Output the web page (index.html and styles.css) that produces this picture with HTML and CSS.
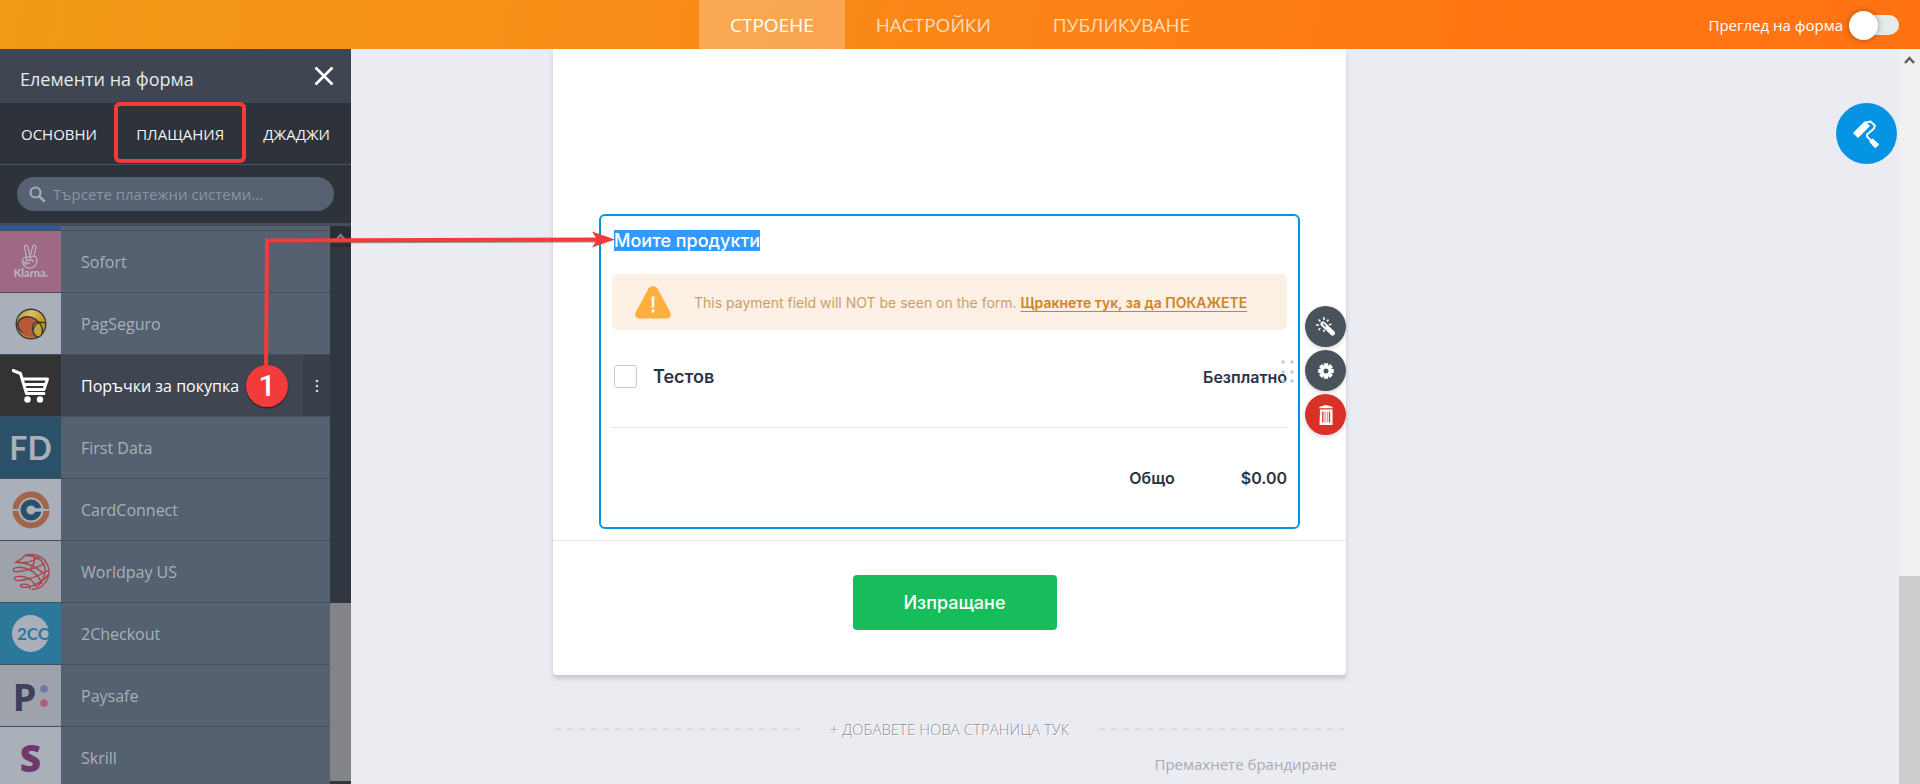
FILE: index.html
```html
<!DOCTYPE html>
<html lang="bg">
<head>
    <meta charset="UTF-8">
    <meta name="viewport" content="width=device-width, initial-scale=1.0">
    <title>Строене на форма</title>
    <link rel="stylesheet" href="styles.css">
</head>
<body>
    <header class="topbar">
        <nav class="topnav">
            <a href="#build" class="active">СТРОЕНЕ</a>
            <a href="#settings">НАСТРОЙКИ</a>
            <a href="#publish">ПУБЛИКУВАНЕ</a>
        </nav>
        <label class="preview">
            <span>Преглед на форма</span>
            <input type="checkbox" class="switch">
        </label>
    </header>

    <div class="workspace">
        <!-- Елементи -->
        <aside class="sidebar">
            <div class="side-head">
                <h2>Елементи на форма</h2>
                <button class="close" aria-label="Затвори">
                    <svg width="20" height="20" viewBox="0 0 20 20"><path d="M1.5 1.5l17 17M18.5 1.5l-17 17" stroke="#fff" stroke-width="2.6"/></svg>
                </button>
            </div>
            <div class="side-tabs">
                <button>ОСНОВНИ</button>
                <button class="active">ПЛАЩАНИЯ</button>
                <button>ДЖАДЖИ</button>
            </div>
            <div class="search">
                <label class="search-box">
                    <svg width="17" height="17" viewBox="0 0 17 17"><circle cx="6.5" cy="6.5" r="5" fill="none" stroke="#a3abb7" stroke-width="2.2"/><path d="M10.3 10.3l5.4 5.4" stroke="#a3abb7" stroke-width="2.6"/></svg>
                    <input type="text" placeholder="Търсете платежни системи..." aria-label="Търсене">
                </label>
            </div>
            <div class="side-body">
                <ul class="elements">
                    <li class="cut"><span class="logo blue"></span></li>
                    <li>
                        <span class="logo pink">
                            <svg width="40" height="38" viewBox="0 0 40 38" fill="none" stroke="#b9b4c0" stroke-width="1.2">
                                <path d="M15.5 14L13.5 4.500Q13.300 2.400 14.900 2.200Q16.300 2 16.900 4L19 12.500M19.500 12.500L21.700 3.500Q22.300 1.800 23.900 2.200Q25.300 2.800 24.900 4.500L23 13.500M15.500 14Q11.500 14.500 11.400 17.500Q11.600 22.500 15.500 24.600Q20 26.200 23.500 23.500Q26.600 20 25.600 15.200Q24.500 12.800 21 13.300L16 14.200Q14.500 15.700 16.300 17.200L20 17Q22.500 17.300 21.800 19.300M16.300 17.200Q14 18 15 19.600Q16.700 21 19 19.800M11.800 18.500L15.300 22M19 13.200L19.700 16.800"/>
                                <text x="20" y="34" class="klarna">Klarna.</text>
                            </svg>
                        </span>
                        <a href="#sofort">Sofort</a>
                    </li>
                    <li>
                        <span class="logo light">
                            <svg width="32" height="32" viewBox="0 0 32 32">
                                <defs>
                                    <linearGradient id="uol" x1="0" y1="0" x2="1" y2="1"><stop offset="0" stop-color="#a8741f"/><stop offset=".3" stop-color="#d8bf6a"/><stop offset=".6" stop-color="#c79a2c"/><stop offset="1" stop-color="#b08a2f"/></linearGradient>
                                </defs>
                                <circle cx="16" cy="16" r="14.8" fill="url(#uol)" stroke="#3b3937" stroke-width="1.4"/>
                                <ellipse cx="14" cy="18" rx="11.5" ry="9" fill="#b9583a" stroke="#3b3937" stroke-width="1.4" transform="rotate(15 14 18)"/>
                                <path d="M5 24q8 8 18 4q-6-2-9-3z" fill="#b9583a"/>
                                <ellipse cx="22.500" cy="21.500" rx="4.800" ry="7.500" fill="#c4a43a" stroke="#3b3937" stroke-width="1.400" transform="rotate(-12 22.500 21.500)"/>
                                <path d="M30 15q-9-3-12 7" fill="none" stroke="#3b3937" stroke-width="1.400"/>
                            </svg>
                        </span>
                        <a href="#pagseguro">PagSeguro</a>
                    </li>
                    <li class="selected">
                        <span class="logo dark">
                            <svg width="38" height="36" viewBox="0 0 38 36" fill="none" stroke="#fff" stroke-width="3">
                                <path d="M1 2.500l7.500 3 6 20H32" stroke-linejoin="round" stroke-linecap="round"/>
                                <path d="M10 11h25.500l-3.500 10.500H14M11.500 16.500h22" stroke-linejoin="round"/>
                                <circle cx="15.500" cy="31.500" r="3.200" fill="#fff" stroke="none"/>
                                <circle cx="28" cy="31.500" r="3.200" fill="#fff" stroke="none"/>
                            </svg>
                        </span>
                        <a href="#purchase">Поръчки за покупка</a>
                        <button class="more" aria-label="Още">
                            <svg width="4" height="14" viewBox="0 0 4 14" fill="#d5d8dd"><circle cx="2" cy="2" r="1.300"/><circle cx="2" cy="7" r="1.300"/><circle cx="2" cy="12" r="1.300"/></svg>
                        </button>
                    </li>
                    <li>
                        <span class="logo navy"><b class="fd">FD</b></span>
                        <a href="#firstdata">First Data</a>
                    </li>
                    <li>
                        <span class="logo light">
                            <svg width="38" height="38" viewBox="0 0 38 38" fill="none">
                                <circle cx="19" cy="19" r="15.500" stroke="#a1664a" stroke-width="6"/>
                                <path d="M0 19h8M30 19h8" stroke="#aab0ba" stroke-width="2.200"/>
                                <circle cx="19" cy="19" r="7.500" stroke="#2c4f68" stroke-width="6"/>
                                <path d="M21 19h9" stroke="#aab0ba" stroke-width="3.500"/>
                            </svg>
                        </span>
                        <a href="#cardconnect">CardConnect</a>
                    </li>
                    <li>
                        <span class="logo grey">
                            <svg width="38" height="38" viewBox="0 0 38 38" fill="none" stroke="#ab434b" stroke-width="1.3">
                                <path d="M12 2.500C24-1 35 5 36.800 16C38 27 30 36.500 20 36.500"/>
                                <path d="M14 2.500Q30 3 33 15Q34 26 25 34"/>
                                <path d="M13 2.500Q9 7 4 9Q14 11 22 7Q26 5 28 3"/>
                                <path d="M4 9Q20 10 31 20"/>
                                <path d="M1 17Q2 14 9 14.500Q24 16 30 31M1 17Q2 20 10 18Q24 16 33 10"/>
                                <path d="M21 1.500Q25 8 18 17"/>
                                <path d="M2 26Q3 22.500 10 23.500Q21 25 24 34.500M2 26Q4 29 14 26.500Q28 23 36.500 17"/>
                                <path d="M8 33Q9 30.500 15 31.500Q19 33 18 36.500M8 33Q10 35.500 18 33.500Q30 30 36 22"/>
                            </svg>
                        </span>
                        <a href="#worldpay">Worldpay US</a>
                    </li>
                    <li>
                        <span class="logo cyan"><b class="two-co">2CO</b></span>
                        <a href="#2checkout">2Checkout</a>
                    </li>
                    <li>
                        <span class="logo grey">
                            <b class="paysafe">P</b>
                            <svg width="8" height="24" viewBox="0 0 8 24"><circle cx="4" cy="5" r="3.800" fill="#6c76aa"/><circle cx="4" cy="19" r="3.800" fill="#af5c78"/></svg>
                        </span>
                        <a href="#paysafe">Paysafe</a>
                    </li>
                    <li>
                        <span class="logo light"><b class="skrill">S</b></span>
                        <a href="#skrill">Skrill</a>
                    </li>
                </ul>
                <div class="side-scroll">
                    <span class="up"><svg width="11" height="8" viewBox="0 0 11 8"><path d="M1 7l4.500-5L10 7" fill="none" stroke="#7b7f86" stroke-width="2.500"/></svg></span>
                    <span class="thumb"></span>
                </div>
            </div>
        </aside>

        <!-- Форма -->
        <main class="canvas">
            <form class="sheet">
                <div class="sheet-body">
                    <section class="field">
                        <h3><mark>Моите продукти</mark></h3>
                        <div class="warning">
                            <svg width="36" height="33" viewBox="0 0 36 33"><path d="M13.500 2.600Q18-2.600 22.500 2.600L35.200 26Q37.500 31.500 32 32.500H4Q-1.500 31.500.8 26z" fill="#fdb03f"/><path d="M16.500 10.500h3l-.4 11h-2.200z" fill="#fff"/><circle cx="18" cy="25" r="1.700" fill="#fff"/></svg>
                            <p>This payment field will NOT be seen on the form. <a href="#show">Щракнете тук, за да ПОКАЖЕТЕ</a></p>
                        </div>
                        <div class="product">
                            <label><input type="checkbox"> Тестов</label>
                            <strong>Безплатно</strong>
                            <svg class="drag" width="13" height="24" viewBox="0 0 13 24" fill="#c3cad8"><circle cx="2" cy="2" r="1.800"/><circle cx="11" cy="2" r="1.800"/><circle cx="2" cy="12" r="1.800"/><circle cx="11" cy="12" r="1.800"/><circle cx="2" cy="21" r="1.800"/><circle cx="11" cy="21" r="1.800"/></svg>
                        </div>
                        <div class="total">
                            <strong>Общо</strong>
                            <strong>$0.00</strong>
                        </div>
                        <div class="tools">
                            <button type="button" aria-label="Съветник">
                                <svg width="20" height="20" viewBox="0 0 20 20"><path d="M7 7l9.500 9" stroke="#fff" stroke-width="5" stroke-linecap="round"/><path d="M6.800 6.600l3 2.900" stroke="#4a525c" stroke-width="1.200"/><path d="M8 0v3M12.500 2.500l-1.500 2M2.500 2.500l2 2M0 8h3M2.500 13l1.800-1.700M13 7.500h2.500M8 12.500v2.500" stroke="#fff" stroke-width="1.500"/></svg>
                            </button>
                            <button type="button" aria-label="Настройки">
                                <svg width="16" height="16" viewBox="0 0 16 16"><g stroke="#fff" stroke-width="4.200"><path d="M8 .2v15.600M.2 8h15.600M2.500 2.500l11 11M13.500 2.500l-11 11"/></g><circle cx="8" cy="8" r="5.800" fill="#fff"/><circle cx="8" cy="8" r="2.500" fill="#4a525c"/></svg>
                            </button>
                            <button type="button" class="delete" aria-label="Изтриване">
                                <svg width="16" height="20" viewBox="0 0 16 20"><path d="M1 3.300Q1 1.500 5 1L6 .3h4L11 1q4 .5 4 2.300zM2 4.500h12.500V20H1.500z" fill="#fff"/><path d="M4.800 6.500v11M11.500 6.500v11" stroke="#d93027" stroke-width="1.300"/><path d="M7 6.500v11M9.300 6.500v11" stroke="#ee9a95" stroke-width="1.300"/></svg>
                            </button>
                        </div>
                    </section>
                </div>
                <div class="sheet-foot">
                    <button type="button" class="submit">Изпращане</button>
                </div>
            </form>
            <button class="add-page"><span>+ ДОБАВЕТЕ НОВА СТРАНИЦА ТУК</span></button>
            <a href="#branding" class="branding">Премахнете брандиране</a>
        </main>

        <div class="page-scroll">
            <span class="up"><svg width="11" height="8" viewBox="0 0 11 8"><path d="M1 7l4.500-5L10 7" fill="none" stroke="#606060" stroke-width="2.500"/></svg></span>
            <span class="thumb"></span>
        </div>
    </div>

    <button class="designer" aria-label="Дизайн">
        <svg width="27" height="28" viewBox="0 0 27 28">
            <path d="M1 13L12 2L16 6L5 17z" fill="#fff" stroke="#fff" stroke-width="1.500" stroke-linejoin="round"/>
            <path d="M13 2.500L17.500 1.500L21.800 5.500L21 8.500L14 14.500V16.500L17.500 20" fill="none" stroke="#fff" stroke-width="1.900" stroke-linejoin="round"/>
            <path d="M17 21.500L19.500 19.200L25.200 24.500L22.200 27.200z" fill="#fff" stroke="#fff" stroke-width="1.500" stroke-linejoin="round"/>
        </svg>
    </button>

    <!-- Стъпка 1 -->
    <span class="frame"></span>
    <svg class="arrow" width="360" height="160" viewBox="0 0 360 160">
        <path d="M14 16.500L345 15.500" fill="none" stroke="#5a5055" stroke-opacity=".6" stroke-width="2"/>
        <path d="M11 146L12 14.500L345 13.500" fill="none" stroke="#f43b3b" stroke-width="4"/>
        <path d="M337 5.500L360 13.500L337 21.500L342 13.500z" fill="#f43b3b"/>
    </svg>
    <span class="step">1</span>
</body>
</html>
```

FILE: styles.css
```css
* {
    box-sizing: border-box;
}

body {
    margin: 0;
    height: 100vh;
    display: flex;
    flex-direction: column;
    overflow: hidden;
    position: relative;
    background-color: #ebecf2;
    font-family: "Segoe UI", "Open Sans", sans-serif;
}

button {
    font-family: inherit;
    border: none;
    background: none;
    padding: 0;
    cursor: pointer;
}

a {
    text-decoration: none;
}

svg {
    display: block;
    flex-shrink: 0;
}

/* header */
.topbar {
    height: 49px;
    flex-shrink: 0;
    display: grid;
    grid-template-columns: 1fr auto 1fr;
    background: linear-gradient(100deg, #f29b18 0%, #fb8316 55%, #ff7513 80%, #ff7313 100%);
}

.topnav {
    grid-column: 2;
    display: flex;
}

.topnav a {
    padding: 0 31px;
    line-height: 50px;
    font-size: 19px;
    color: #ffddb9;
}

.topnav a.active {
    color: #fff;
    background-color: rgba(255, 255, 255, 0.26);
}

.preview {
    display: flex;
    align-items: center;
    justify-content: flex-end;
    gap: 12px;
    padding-right: 21px;
    color: #fff;
    font-size: 15px;
}

.switch {
    appearance: none;
    width: 44px;
    height: 20px;
    margin: 0;
    border-radius: 10px;
    background-color: #e6ebeb;
    display: flex;
    align-items: center;
}

.switch::before {
    content: "";
    width: 29px;
    height: 29px;
    flex-shrink: 0;
    margin-left: -6px;
    border-radius: 50%;
    background-color: #fff;
    box-shadow: 0 0 6px rgba(0, 0, 0, 0.35);
}

.workspace {
    flex: 1;
    min-height: 0;
    display: flex;
}

/* sidebar */
.sidebar {
    width: 351px;
    flex-shrink: 0;
    display: flex;
    flex-direction: column;
    background-color: #2e323a;
}

.side-head {
    height: 54px;
    flex-shrink: 0;
    display: flex;
    justify-content: space-between;
    align-items: center;
    padding: 0 17px 0 20px;
    background-color: #3f4651;
}

.side-head h2 {
    margin: 6px 0 0;
    font-size: 18px;
    font-weight: 400;
    color: #e8eaed;
}

.side-tabs {
    height: 62px;
    flex-shrink: 0;
    display: flex;
    justify-content: space-between;
    padding: 0 21px;
    border-bottom: 1px solid #4a5568;
}

.side-tabs button {
    font-size: 15px;
    color: #f2f3f4;
}

.search {
    padding: 12px 17px;
    border-bottom: 3px solid #464d5a;
}

.search-box {
    height: 34px;
    display: flex;
    align-items: center;
    gap: 7px;
    padding: 0 12px;
    border-radius: 17px;
    background-color: #566171;
}

.search-box input {
    flex: 1;
    min-width: 0;
    border: none;
    outline: none;
    background: none;
    padding: 0;
    font-family: inherit;
    font-size: 15px;
    color: #fff;
}

.search-box input::placeholder {
    color: #8b95a3;
}

.side-body {
    flex: 1;
    min-height: 0;
    display: flex;
}

.elements {
    flex: 1;
    margin: 0;
    padding: 0;
    list-style: none;
    overflow: hidden;
}

.elements li {
    height: 62px;
    display: flex;
    align-items: center;
    background-color: #556070;
    border-bottom: 1px solid #464d5c;
}

.elements li.cut {
    height: 5px;
}

.elements li.selected {
    background-color: #3f4651;
}

.elements a {
    flex: 1;
    padding-left: 20px;
    font-size: 16px;
    color: #a9b0b9;
}

.elements .selected a {
    color: #fff;
}

.logo {
    width: 61px;
    height: 100%;
    flex-shrink: 0;
    display: flex;
    align-items: center;
    justify-content: center;
    gap: 4px;
    font-family: Lato, sans-serif;
}

.blue { background-color: #2c5a96; }
.pink { background-color: #9f6883; }
.light { background-color: #aab0ba; }
.grey { background-color: #9da2ab; }
.dark { background-color: #333; }
.navy { background-color: #2b5169; }
.cyan { background-color: #2b789b; }

.klarna {
    font: 900 11px Lato, sans-serif;
    text-anchor: middle;
    fill: #b9b4c0;
    stroke: none;
}

.fd {
    font-size: 32px;
    color: #a9b0ba;
}

.two-co {
    width: 37px;
    height: 37px;
    padding-left: 5px;
    border-radius: 50%;
    background-color: #aab0ba;
    color: #2b789b;
    font-size: 17px;
    line-height: 37px;
}

.paysafe {
    font: 700 38px "Noto Sans", sans-serif;
    color: #40405a;
}

.skrill {
    font: 900 37px "Noto Sans", sans-serif;
    color: #6d3a6b;
}

.more {
    width: 27px;
    height: 100%;
    display: flex;
    align-items: center;
    justify-content: center;
    background-color: #393f4a;
}

.side-scroll,
.page-scroll {
    width: 21px;
    flex-shrink: 0;
    display: flex;
    flex-direction: column;
    justify-content: space-between;
}

.up {
    height: 21px;
    display: flex;
    align-items: center;
    justify-content: center;
}

.side-scroll {
    padding-bottom: 3px;
    background-color: #313740;
}

.side-scroll .up {
    background-color: #292d34;
}

.side-scroll .thumb {
    height: 32%;
    background-color: #828489;
}

.page-scroll {
    background-color: #f0f0f0;
}

.page-scroll .thumb {
    height: 28.3%;
    background-color: #cdcdcd;
}

/* form */
.canvas {
    flex: 1;
    display: flex;
    flex-direction: column;
    align-items: center;
    padding-right: 351px;
    overflow: hidden;
}

.sheet,
.add-page,
.branding {
    width: 100%;
    max-width: 793px;
}

.sheet {
    flex-shrink: 0;
    background-color: #fff;
    border-radius: 0 0 4px 4px;
    box-shadow: 0 4px 4px rgba(150, 155, 185, 0.45);
    font-family: Inter, sans-serif;
    color: #2c3345;
}

.sheet-body {
    padding: 165px 46px 11px;
    border-bottom: 1px solid #e3e5ef;
}

.field {
    position: relative;
    padding: 14px 11px 37px;
    border: 2px solid #0594e2;
    border-radius: 6px;
}

.field h3 {
    margin: 0 2px 22px;
    font-size: 18px;
    font-weight: 500;
    line-height: 22px;
}

.field mark {
    background-color: #3399ff;
    color: #fff;
}

.warning {
    height: 56px;
    display: flex;
    align-items: center;
    gap: 23px;
    padding: 0 23px;
    border-radius: 5px;
    background-color: #fcefe3;
    font-size: 14px;
    color: #c9a06b;
}

.warning p {
    margin: 0;
}

.warning a {
    color: #cd8523;
    font-weight: 600;
    text-decoration: underline;
    text-underline-offset: 3px;
}

.product {
    position: relative;
    display: flex;
    justify-content: space-between;
    align-items: center;
    height: 98px;
    padding: 0 0 4px 2px;
    border-bottom: 1px solid #dfe2ea;
}

.product label {
    display: flex;
    align-items: center;
    gap: 16px;
    font-size: 18px;
    font-weight: 600;
}

.product input {
    appearance: none;
    width: 23px;
    height: 23px;
    margin: 0;
    border: 1px solid #c3cad8;
    border-radius: 3px;
    background-color: #fff;
}

.drag {
    position: absolute;
    right: -7px;
    top: 30px;
}

.total {
    display: flex;
    justify-content: flex-end;
    gap: 66px;
    padding-top: 38px;
    line-height: 24px;
}

.product strong,
.total strong {
    font-size: 16px;
    font-weight: 600;
}

.tools {
    position: absolute;
    right: -48px;
    top: 90px;
    display: flex;
    flex-direction: column;
    gap: 3px;
}

.tools button {
    width: 41px;
    height: 41px;
    display: flex;
    align-items: center;
    justify-content: center;
    border-radius: 50%;
    background-color: #4a525c;
    box-shadow: 0 2px 4px rgba(0, 0, 0, 0.15);
}

.tools .delete {
    background-color: #d93027;
}

.sheet-foot {
    display: flex;
    justify-content: center;
    padding: 34px 0 45px 10px;
}

.submit {
    width: 204px;
    height: 55px;
    border-radius: 4px;
    background-color: #18bd5b;
    color: #fff;
    font-size: 18px;
    font-weight: 500;
}

.add-page {
    display: flex;
    align-items: center;
    gap: 30px;
    margin-top: 42px;
    padding: 0 2px;
    font-size: 15px;
    font-weight: 300;
    line-height: 24px;
    color: #8f9197;
    text-shadow: 1px 1px #fff;
}

.add-page::before,
.add-page::after {
    content: "";
    flex: 1;
    height: 2px;
    background: repeating-linear-gradient(90deg, #d8dade 0 6px, transparent 6px 12px);
}

.branding {
    margin-top: 11px;
    padding-right: 9px;
    text-align: right;
    font-size: 15px;
    line-height: 24px;
    color: #a9abb0;
}

/* floating */
.designer {
    position: absolute;
    top: 103px;
    right: 23px;
    width: 61px;
    height: 61px;
    display: flex;
    align-items: center;
    justify-content: center;
    border-radius: 50%;
    background-color: #0594e4;
}

.frame {
    position: absolute;
    left: 114px;
    top: 102px;
    width: 132px;
    height: 61px;
    border: 4px solid #f43b3b;
    border-radius: 6px;
}

.arrow {
    position: absolute;
    left: 255px;
    top: 226px;
}

.step {
    position: absolute;
    left: 246px;
    top: 365px;
    width: 42px;
    height: 42px;
    border-radius: 50%;
    background-color: #f43b3b;
    box-shadow: 0 1px 2px rgba(0, 0, 0, 0.6);
    color: #fff;
    font: 500 30px/42px Roboto, sans-serif;
    text-align: center;
}
```
